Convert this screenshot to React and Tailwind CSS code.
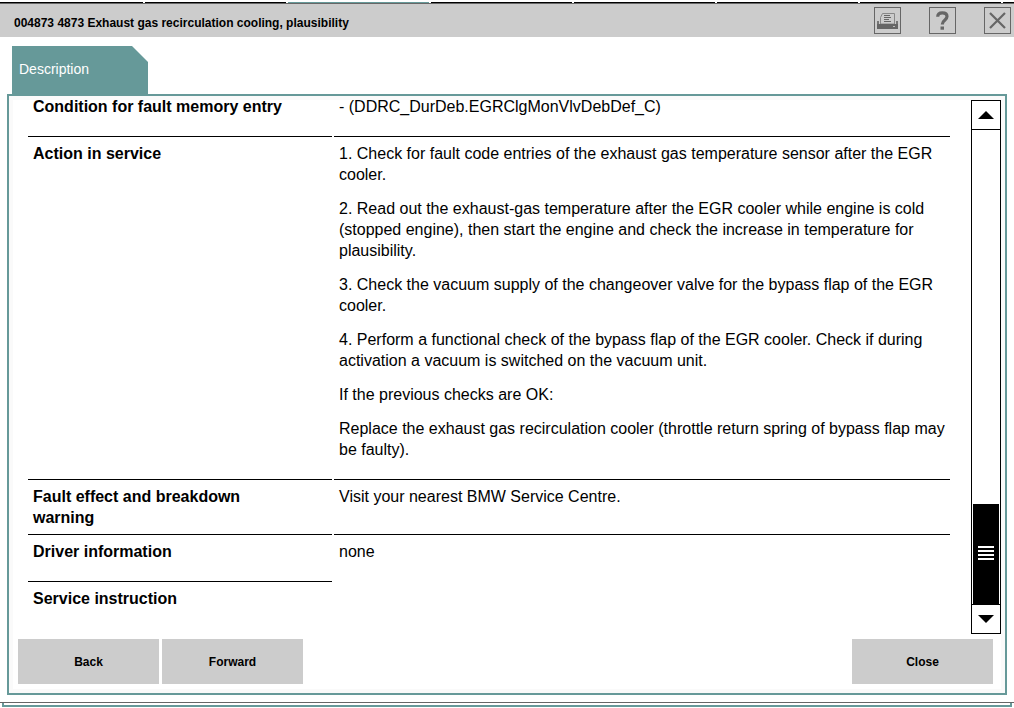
import React from "react";

const topTabs = [1, 2, 3, 4, 5, 6, 7];

const rows = [
  {
    label: "Condition for fault memory entry",
    text: ["- (DDRC_DurDeb.EGRClgMonVlvDebDef_C)"],
  },
  {
    label: "Action in service",
    text: [
      "1. Check for fault code entries of the exhaust gas temperature sensor after the EGR cooler.",
      "2. Read out the exhaust-gas temperature after the EGR cooler while engine is cold (stopped engine), then start the engine and check the increase in temperature for plausibility.",
      "3. Check the vacuum supply of the changeover valve for the bypass flap of the EGR cooler.",
      "4. Perform a functional check of the bypass flap of the EGR cooler. Check if during activation a vacuum is switched on the vacuum unit.",
      "If the previous checks are OK:",
      "Replace the exhaust gas recirculation cooler (throttle return spring of bypass flap may be faulty).",
    ],
  },
  {
    label: "Fault effect and breakdown warning",
    text: ["Visit your nearest BMW Service Centre."],
  },
  { label: "Driver information", text: ["none"] },
  { label: "Service instruction", text: [] },
];

const IconButton = ({ label, children }) => (
  <button
    type="button"
    aria-label={label}
    className="w-[27px] h-[27px] border border-[#666] flex items-center justify-center cursor-pointer"
  >
    {children}
  </button>
);

const PrinterIcon = () => (
  <svg width="25" height="25" viewBox="0 0 25 25">
    <path d="M2 13h2v3h17v-3h2v8H2z" fill="#777" />
    <path d="M5.5 16V9.5L7.5 5.5h12V16z" fill="#ccc" stroke="#888" />
    <path d="M9 7.5h6M9 9.5h7M9 11.5h5M9 13.5h7" stroke="#666" />
    <path d="M2 16h21v5H2z" fill="#666" />
    <path d="M18 18.5h2" stroke="#bbb" />
  </svg>
);

const HelpIcon = () => (
  <svg width="25" height="25" viewBox="0 0 25 25">
    <path
      d="M7.7 8.8c0-2.7 1.9-4 4.6-4s4.7 1.4 4.7 3.8c0 3.6-4.6 3.6-4.6 7.4v.4"
      fill="none"
      stroke="#666"
      strokeWidth="3.2"
    />
    <path d="M10.5 18.5h3.5v3.2h-3.5z" fill="#666" />
  </svg>
);

const CloseIcon = () => (
  <svg width="25" height="25" viewBox="0 0 25 25">
    <path d="M5 5l15 15M20 5L5 20" stroke="#666" strokeWidth="2.2" />
  </svg>
);

const FooterButton = ({ children }) => (
  <button
    type="button"
    className="w-[141px] h-[45px] bg-[#ccc] text-xs font-bold cursor-pointer"
  >
    {children}
  </button>
);

const ScrollBar = () => (
  <div className="w-[30px] shrink-0 border border-black flex flex-col">
    <button
      type="button"
      aria-label="Scroll up"
      className="h-[29px] border-b border-black flex items-center justify-center"
    >
      <svg width="16" height="8" viewBox="0 0 16 8">
        <path d="M0 8L8 0l8 8z" />
      </svg>
    </button>
    <div className="flex-1 flex flex-col justify-end px-px">
      <div className="h-[100px] pb-0.5 bg-black flex flex-col items-center justify-center gap-0.5">
        <span className="w-4 h-0.5 bg-white" />
        <span className="w-4 h-0.5 bg-white" />
        <span className="w-4 h-0.5 bg-white" />
        <span className="w-4 h-0.5 bg-white" />
      </div>
    </div>
    <button
      type="button"
      aria-label="Scroll down"
      className="h-[29px] border-t border-black flex items-center justify-center"
    >
      <svg width="16" height="8" viewBox="0 0 16 8">
        <path d="M0 0l8 8 8-8z" />
      </svg>
    </button>
  </div>
);

const App = () => {
  return (
    <div className="bg-white text-black font-['Liberation_Sans',Arial,sans-serif] overflow-hidden">
      {/* Tabs of the window behind */}
      <div className="flex gap-0.5 pt-0.5 overflow-hidden">
        {topTabs.map((tab) => (
          <span
            key={tab}
            className={`h-px shrink-0 ${tab === 1 ? "w-[143px]" : "w-[141px]"} ${
              tab === 3 ? "bg-[#699]" : "bg-black"
            }`}
          />
        ))}
        <span className="flex-1 h-px bg-black" />
      </div>

      {/* Title bar */}
      <header className="h-[34px] border-t border-[#666] bg-[#ccc] flex items-center justify-between pl-3.5 pr-[3px]">
        <h1 className="text-xs font-bold pt-1">
          004873 4873 Exhaust gas recirculation cooling, plausibility
        </h1>
        <div className="flex gap-7">
          <IconButton label="Print">
            <PrinterIcon />
          </IconButton>
          <IconButton label="Help">
            <HelpIcon />
          </IconButton>
          <IconButton label="Close window">
            <CloseIcon />
          </IconButton>
        </div>
      </header>

      <main className="px-[7px] pt-[9px] pb-[7px]">
        <button
          type="button"
          className="ml-[5px] w-[136px] h-12 pl-[7px] pb-0.5 block bg-[#699] text-white text-sm text-left [clip-path:polygon(0_0,120px_0,100%_16px,100%_100%,0_100%)]"
        >
          Description
        </button>

        <section className="border-2 border-[#699] bg-[#fafafa] p-1">
          <div className="bg-white">
            <div className="flex">
              <div className="flex-1 pl-[13px] pr-[19px] pb-[19px]">
                <table className="-mt-1 w-full table-fixed border-separate border-spacing-x-0.5 border-spacing-y-0 text-base leading-[21px]">
                  <tbody>
                    {rows.map((row, i) => (
                      <tr key={row.label} className="align-top">
                        <th
                          scope="row"
                          className={`w-[304px] pl-[5px] pr-8 pb-1.5 text-left font-bold ${
                            i > 0 ? "border-t border-black pt-1.5" : ""
                          }`}
                        >
                          {row.label}
                        </th>
                        <td
                          className={`pl-[5px] ${
                            i > 0 && row.text.length > 0
                              ? "border-t border-black"
                              : ""
                          } ${i > 0 ? "pt-1.5" : ""} ${
                            i === 2 ? "" : "pb-1.5"
                          }`}
                        >
                          {row.text.map((line) => (
                            <p key={line} className="mb-[13px]">
                              {line}
                            </p>
                          ))}
                        </td>
                      </tr>
                    ))}
                  </tbody>
                </table>
              </div>
              <ScrollBar />
            </div>

            {/* Footer buttons */}
            <div className="flex justify-between pt-[5px] pb-[5px] pl-[5px] pr-2">
              <div className="flex gap-[3px]">
                <FooterButton>Back</FooterButton>
                <FooterButton>Forward</FooterButton>
              </div>
              <FooterButton>Close</FooterButton>
            </div>
          </div>
        </section>
      </main>

      {/* Bottom edge of the window behind */}
      <div className="border-t border-[#666] px-0.5">
        <div className="h-1 border-x-2 border-b-2 border-[#699]" />
      </div>
    </div>
  );
};

export default App;
